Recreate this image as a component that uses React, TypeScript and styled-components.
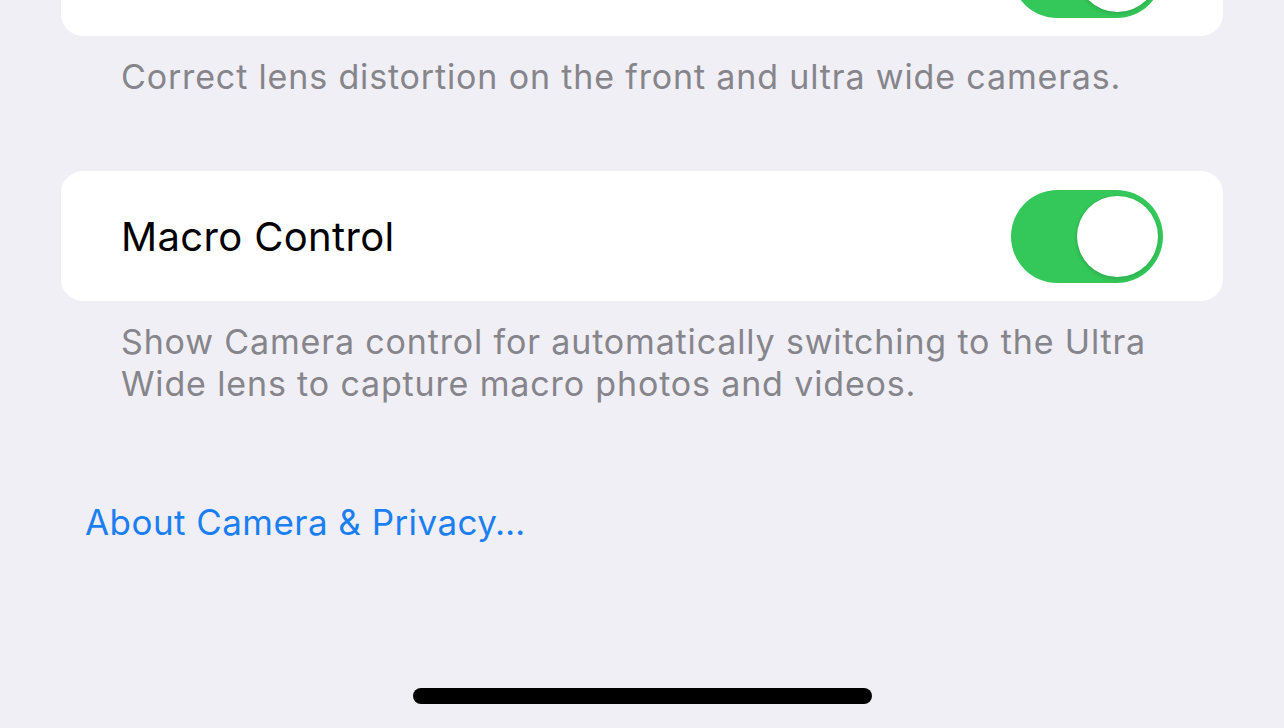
import React from 'react'
import styled, {createGlobalStyle} from 'styled-components'

const GlobalStyle = createGlobalStyle`
    html, body {
        margin: 0;
        padding: 0;
        background: #f0eff5;
        overflow: hidden;
    }
    body {
        font-family: 'Inter', 'Noto Sans', 'Liberation Sans', sans-serif;
        -webkit-font-smoothing: antialiased;
    }
`

const Screen = styled.div`
    width: 1284px;
    height: 728px;
    display: flex;
    flex-direction: column;
    background: #f0eff5;
    overflow: hidden;
`

// scrolled list: the first group sits partly above the viewport
const List = styled.div<{$offset: number}>`
    display: flex;
    flex-direction: column;
    margin-top: ${(p) => -p.$offset}px;
`

const Group = styled.div<{$gap?: number}>`
    margin: ${(p) => p.$gap ?? 0}px 61px 0 61px;
    height: 130px;
    background: #ffffff;
    border-radius: 22px;
    display: flex;
    align-items: center;
    justify-content: flex-end;
    padding: 0 60px;
    box-sizing: border-box;
`

const RowLabel = styled.span`
    flex: 1;
    font-size: 40px;
    color: #000000;
    letter-spacing: 0.35px;
`

const Footer = styled.p`
    margin: 20px 0 0 0;
    padding: 0 121px;
    font-size: 34px;
    line-height: 42px;
    color: #86858b;
    letter-spacing: 0.85px;
`

const Track = styled.div<{$on: boolean}>`
    width: 152px;
    height: 93px;
    border-radius: 47px;
    background: ${(p) => (p.$on ? '#34c759' : '#e9e9ea')};
    position: relative;
    flex-shrink: 0;
`

const Knob = styled.div<{$on: boolean}>`
    position: absolute;
    top: 6px;
    ${(p) => (p.$on ? 'right: 5px;' : 'left: 5px;')}
    width: 81px;
    height: 81px;
    border-radius: 50%;
    background: #ffffff;
    box-shadow: 0 2px 4px rgba(0, 0, 0, 0.12), -1px 0 2px rgba(0, 0, 0, 0.06);
`

const PrivacyLink = styled.a`
    display: block;
    margin: 96px 0 0 85px;
    font-size: 35px;
    line-height: 42px;
    color: #1a7ff2;
    text-decoration: none;
    letter-spacing: 0.45px;
`

const HomeIndicator = styled.div`
    margin: auto auto 24px auto;
    width: 459px;
    height: 16px;
    border-radius: 8px;
    background: #000000;
`

const Toggle: React.FC<{on: boolean}> = ({on}) => (
    <Track $on={on}>
        <Knob $on={on} />
    </Track>
)

const App: React.FC = () => {
    return (
        <Screen>
            <GlobalStyle />
            <List $offset={94}>
                <Group>
                    <Toggle on />
                </Group>
                <Footer>Correct lens distortion on the front and ultra wide cameras.</Footer>
                <Group $gap={73}>
                    <RowLabel>Macro Control</RowLabel>
                    <Toggle on />
                </Group>
                <Footer>
                    Show Camera control for automatically switching to the Ultra
                    <br />
                    Wide lens to capture macro photos and videos.
                </Footer>
                <PrivacyLink href="#">About Camera &amp; Privacy…</PrivacyLink>
            </List>
            <HomeIndicator />
        </Screen>
    )
}

export default App
